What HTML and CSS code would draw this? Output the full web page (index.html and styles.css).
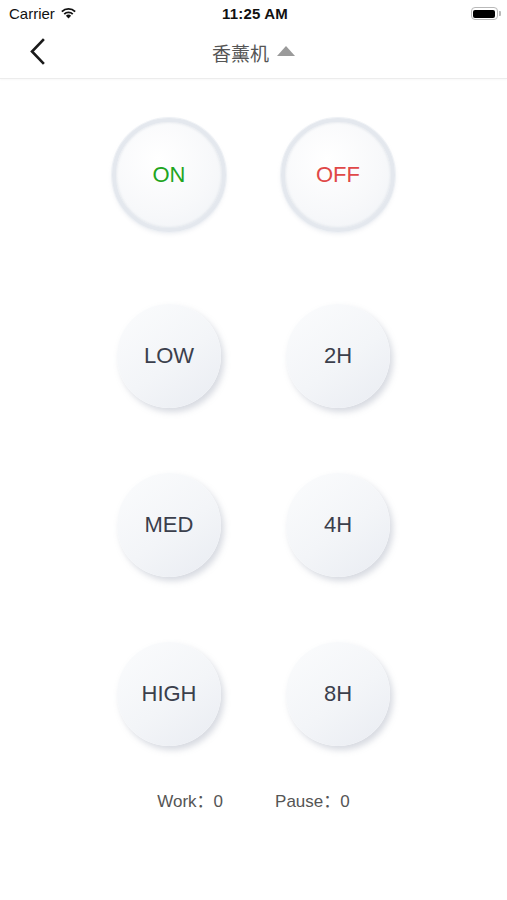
FILE: index.html
```html
<!DOCTYPE html>
<html lang="zh">
<head>
<meta charset="utf-8">
<link rel="stylesheet" href="styles.css">
</head>
<body>
<div class="phone">
  <div class="status">
    <div class="carrier">Carrier
      <svg class="wifi" width="17" height="12" viewBox="0 0 17 12"><path d="M8.5 11.5 L5.9 8.7 A3.8 3.8 0 0 1 11.1 8.7 Z" fill="#111"/><path d="M3.6 6.4 A7 7 0 0 1 13.4 6.4 L12.1 7.7 A5.2 5.2 0 0 0 4.9 7.7 Z" fill="#111"/><path d="M1.2 4 A10.4 10.4 0 0 1 15.8 4 L14.5 5.3 A8.6 8.6 0 0 0 2.5 5.3 Z" fill="#111"/></svg>
    </div>
    <div class="time">11:25 AM</div>
    <div class="battery"><span class="batt-body"><span class="batt-fill"></span></span><span class="batt-nub"></span></div>
  </div>
  <div class="nav">
    <svg class="back" width="18" height="28" viewBox="0 0 18 28"><path d="M14 2 L3 13.5 L14 25" fill="none" stroke="#1a1a1a" stroke-width="2.6" stroke-linecap="square"/></svg>
    <div class="title">香薰机 <span class="tri"></span></div>
  </div>
  <main class="content">
    <div class="grid top-grid">
      <div class="cell"><button class="btn ring on">ON</button></div>
      <div class="cell"><button class="btn ring off">OFF</button></div>
    </div>
    <div class="grid mode-grid">
      <div class="cell"><button class="btn">LOW</button></div>
      <div class="cell"><button class="btn">2H</button></div>
      <div class="cell"><button class="btn">MED</button></div>
      <div class="cell"><button class="btn">4H</button></div>
      <div class="cell"><button class="btn">HIGH</button></div>
      <div class="cell"><button class="btn">8H</button></div>
    </div>
    <div class="stats">
      <span class="work">Work：0</span>
      <span class="pause">Pause：0</span>
    </div>
  </main>
</div>
</body>
</html>
```
FILE: styles.css
```css
* { box-sizing: border-box; }
html, body { margin: 0; padding: 0; background: #fff; }
body { font-family: "Liberation Sans", Arial, "Noto Sans CJK SC", sans-serif; color: #333; }
.phone { width: 507px; height: 900px; background: #fff; overflow: hidden; }

.status { height: 27px; display: flex; align-items: center; justify-content: space-between; padding: 0 6px 0 9px; position: relative; }
.carrier { font-size: 15px; color: #111; display: flex; align-items: center; gap: 5px; width: 120px; }
.wifi { margin-top: -2px; }
.time { font-size: 15px; font-weight: bold; color: #111; letter-spacing: 0.2px; }
.battery { width: 120px; display: flex; justify-content: flex-end; align-items: center; }
.batt-body { width: 27px; height: 13px; border: 1.5px solid #b9b9b9; border-radius: 4px; padding: 1.5px; display: flex; }
.batt-fill { flex: 1; background: #000; border-radius: 2px; }
.batt-nub { width: 2px; height: 5px; background: #b9b9b9; border-radius: 0 1px 1px 0; margin-left: 1px; }

.nav { height: 52px; display: flex; align-items: center; justify-content: center; position: relative; border-bottom: 1px solid #ececec; box-shadow: 0 1px 2px rgba(0,0,0,0.03); }
.back { position: absolute; left: 29px; top: 11px; }
.title { font-family: "Noto Sans CJK SC", sans-serif; font-size: 19px; color: #555; display: flex; align-items: center; gap: 8px; margin-top: -1px; }
.tri { width: 0; height: 0; border-left: 9px solid transparent; border-right: 9px solid transparent; border-bottom: 10px solid #9a9a9a; margin-top: -2px; }

.content { display: flex; flex-direction: column; align-items: center; }
.grid { display: grid; grid-template-columns: 169px 169px; }
.top-grid { margin-top: 39px; }
.mode-grid { margin-top: 72px; row-gap: 65px; }
.cell { display: flex; justify-content: center; align-items: center; }

.btn { width: 104px; height: 104px; border-radius: 50%; border: none; padding: 0; font-family: "Liberation Sans", Arial, sans-serif; font-size: 22px; color: #3b3f4c;
  background: linear-gradient(145deg, #fbfcfd 0%, #f3f5f8 55%, #e9ecf2 100%);
  box-shadow: 3px 4px 6px rgba(140,150,170,0.35), -1px -1px 2px rgba(255,255,255,0.9); }
.btn.ring { width: 114px; height: 114px; border: 4px solid #e4e8ee;
  background: radial-gradient(circle at 40% 35%, #ffffff 0%, #f7f8fa 60%, #eff2f6 100%);
  box-shadow: 0 0 0 1px #eef1f5, 0 2px 4px rgba(160,170,190,0.2), inset 0 0 3px rgba(180,190,205,0.45); }
.btn.on { color: #1fa51f; }
.btn.off { color: #e04848; }

.stats { margin-top: 41px; display: flex; gap: 52px; font-size: 17px; color: #555; }
```
